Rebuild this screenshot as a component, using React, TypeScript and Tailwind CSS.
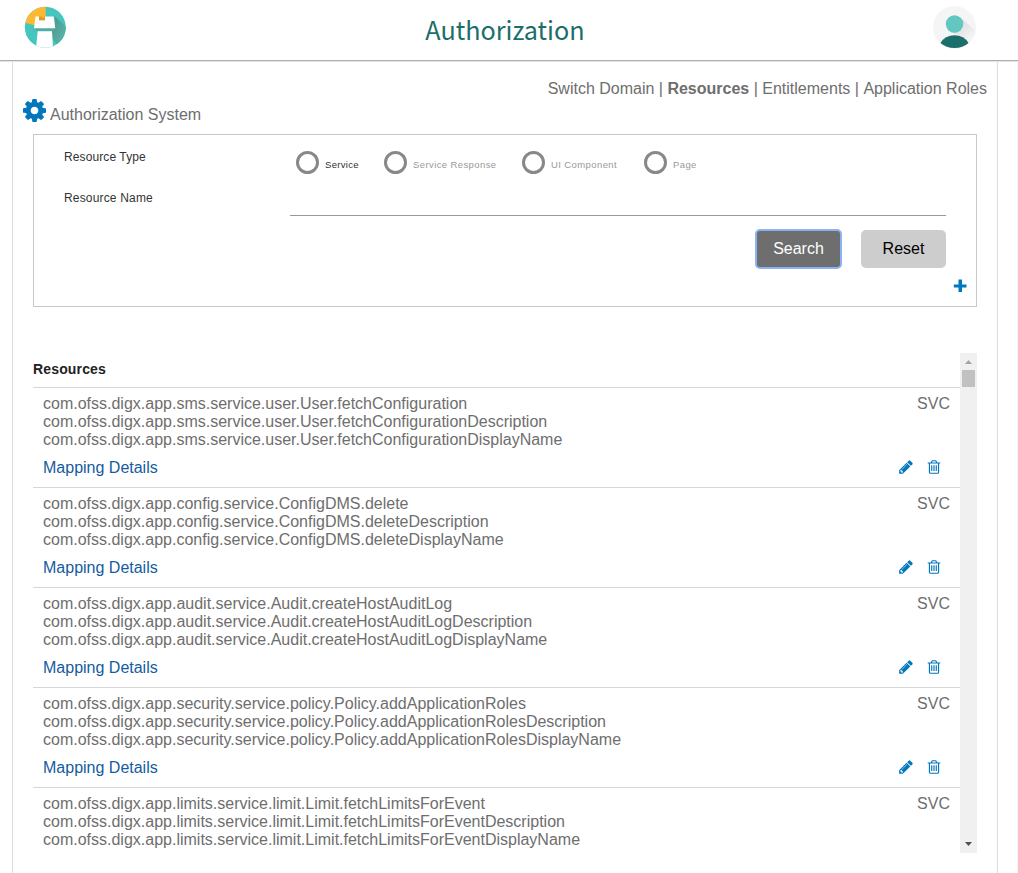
import React from "react";

const resources = [
  "com.ofss.digx.app.sms.service.user.User.fetchConfiguration",
  "com.ofss.digx.app.config.service.ConfigDMS.delete",
  "com.ofss.digx.app.audit.service.Audit.createHostAuditLog",
  "com.ofss.digx.app.security.service.policy.Policy.addApplicationRoles",
  "com.ofss.digx.app.limits.service.limit.Limit.fetchLimitsForEvent",
];

function Logo() {
  return (
    <svg width="42" height="42" viewBox="0 0 42 42">
      <defs>
        <clipPath id="logo-clip"><circle cx="21.300" cy="21.300" r="20.500" /></clipPath>
        <linearGradient id="logo-shade" x1="0" y1="0" x2="1" y2="1">
          <stop offset="0" stopColor="#4a958d" />
          <stop offset="1" stopColor="#5cbab1" />
        </linearGradient>
      </defs>
      <g clipPath="url(#logo-clip)">
        <rect width="42" height="42" fill="#45c5be" />
        <path d="M30.500 10 L42 21 V36 L34 40 L28 32 V25 L31 22 Z" fill="url(#logo-shade)" />
        <path d="M0 0 H21.700 V22 L0 16.500 Z" fill="#fdb933" />
        <path d="M10 22 H31 L28 25 H12 Z" fill="#55aaa2" />
        <path d="M11.500 10.500 H15 V14.200 H21 V10.500 H29.700 L31.300 22.200 H10 Z" fill="#fff" />
        <path d="M15 10.500 H17.500 L19 12 L21 10.500 V14.200 H15 Z" fill="#e09a26" />
        <path d="M13.700 25.200 H28 L29 42 H12 Z" fill="#fff" />
      </g>
    </svg>
  );
}

function Avatar() {
  return (
    <svg width="44" height="43" viewBox="0 0 44 43">
      <defs>
        <clipPath id="avatar-clip"><circle cx="21.500" cy="21.500" r="21.500" /></clipPath>
        <linearGradient id="avatar-shade" x1="0" y1="0" x2="1" y2="1">
          <stop offset="0" stopColor="#d2d2d2" />
          <stop offset="0.900" stopColor="#f5f5f5" />
        </linearGradient>
      </defs>
      <g clipPath="url(#avatar-clip)">
        <rect width="44" height="43" fill="#f5f5f5" />
        <path d="M28 12 L43 25 V33 H35 L17 26 Z" fill="url(#avatar-shade)" />
        <circle cx="21.500" cy="18" r="8.700" fill="#62c7c0" />
        <path d="M7.500 37 Q12 29.300 21.500 29.300 Q31 29.300 35.500 37 Q30 42 21.500 42 Q13 42 7.500 37 Z" fill="#1c6e6a" />
      </g>
    </svg>
  );
}

function Cog() {
  return (
    <svg width="23" height="23" viewBox="0 128 1536 1536" fill="#0277bd">
      <path d="M1024 896q0-106-75-181t-181-75-181 75-75 181 75 181 181 75 181-75 75-181zm512-109v222q0 12-8 23t-20 13l-185 28q-19 54-39 91 35 50 107 138 10 12 10 25t-9 23q-27 37-99 108t-94 71q-12 0-26-9l-138-108q-44 23-91 38-16 136-29 186-7 28-36 28h-222q-14 0-24.500-8.500t-11.500-21.500l-28-184q-49-16-90-37l-141 107q-10 9-25 9-14 0-25-11-126-114-165-168-7-10-7-23 0-12 8-23 15-21 51-66.500t54-70.500q-27-50-41-99l-183-27q-13-2-21-12.500t-8-23.500v-222q0-12 8-23t19-13l186-28q14-46 39-92-40-57-107-138-10-12-10-24 0-10 9-23 26-36 98.500-107.500t94.500-71.500q13 0 26 10l138 107q44-23 91-38 16-136 29-186 7-28 36-28h222q14 0 24.500 8.500t11.500 21.500l28 184q49 16 90 37l142-107q9-9 24-9 13 0 25 10 129 119 165 170 7 8 7 22 0 12-8 23-15 21-51 66.500t-54 70.500q26 50 41 98l183 28q13 2 21 12.500t8 23.500z" />
    </svg>
  );
}

function Pencil() {
  return (
    <svg width="16" height="16" viewBox="0 0 1792 1792" fill="#0277bd">
      <path d="M491 1536l91-91-235-235-91 91v107h128v128h107zm523-928q0-22-22-22-10 0-17 7l-542 542q-7 7-7 17 0 22 22 22 10 0 17-7l542-542q7-7 7-17zm-54-192l416 416-832 832h-416v-416zm683 96q0 53-37 90l-166 166-416-416 166-165q36-38 90-38 53 0 91 38l235 234q37 39 37 91z" />
    </svg>
  );
}

function Trash() {
  return (
    <svg width="16" height="16" viewBox="0 0 1792 1792" fill="#0277bd">
      <path d="M704 736v576q0 14-9 23t-23 9h-64q-14 0-23-9t-9-23v-576q0-14 9-23t23-9h64q14 0 23 9t9 23zm256 0v576q0 14-9 23t-23 9h-64q-14 0-23-9t-9-23v-576q0-14 9-23t23-9h64q14 0 23 9t9 23zm256 0v576q0 14-9 23t-23 9h-64q-14 0-23-9t-9-23v-576q0-14 9-23t23-9h64q14 0 23 9t9 23zm128 724v-948h-896v948q0 22 7 40.500t14.500 27 10.500 8.500h832q3 0 10.500-8.500t14.500-27 7-40.500zm-672-1076h448l-48-117q-7-9-17-11h-317q-10 2-17 11zm928 32v64q0 14-9 23t-23 9h-96v948q0 83-47 143.500t-113 60.500h-832q-66 0-113-58.500t-47-141.500v-952h-96q-14 0-23-9t-9-23v-64q0-14 9-23t23-9h309l70-167q15-37 54-63t79-26h320q40 0 79 26t54 63l70 167h309q14 0 23 9t9 23z" />
    </svg>
  );
}

function Radio({ label, className, dark }: { label: string; className: string; dark?: boolean }) {
  return (
    <label className={`flex h-6 shrink-0 items-center ${className}`}>
      <span className="size-[23px] shrink-0 rounded-full border-[3px] border-[#888]" />
      <span className={`ml-1.5 pt-[5px] text-[9.500px] leading-[15px] whitespace-nowrap ${dark ? "tracking-[0.3px] text-[#333]" : "tracking-[0.4px] text-[#999]"}`}>
        {label}
      </span>
    </label>
  );
}

function ResourceRow({ name, showActions }: { name: string; showActions: boolean }) {
  return (
    <div className="h-[100px] border-t border-[#d6d7da] px-2.5 pt-[7px] leading-[18px]">
      <div className="flex justify-between">
        <div>
          <p>{name}</p>
          <p>{name}Description</p>
          <p>{name}DisplayName</p>
        </div>
        <span>SVC</span>
      </div>
      {showActions && (
        <div className="mt-2.5 flex items-start justify-between">
          <a className="text-[#145c9e]">Mapping Details</a>
          <div className="mr-2 flex gap-3">
            <Pencil />
            <Trash />
          </div>
        </div>
      )}
    </div>
  );
}

export default function App() {
  return (
    <div className="flex h-[873px] w-[1018px] flex-col overflow-hidden bg-white font-['Liberation_Sans',Arial,sans-serif] text-base text-[#6e6e6e]">
      <header className="h-[62px] shrink-0 border-b border-[#e4e4e4]">
        <div className="grid h-[61px] grid-cols-[1fr_auto_1fr] border-b border-[#adadad]">
          <div className="pt-1.5 pl-6"><Logo /></div>
          <h1 className="ml-[-8px] pt-[9px] font-['Noto_Sans_CJK_SC',sans-serif] text-[25.2px] leading-10 text-[#1c6e6a]">
            Authorization
          </h1>
          <div className="flex justify-end pt-1.5 pr-[41px]"><Avatar /></div>
        </div>
      </header>

      <div className="flex min-h-0 flex-1 border-r border-[#f3f3f3]">
        <main className="ml-3 flex w-[986px] flex-col border-x border-[#dedede]">
          <nav className="mt-[18px] mr-2.5 flex justify-end leading-[18px] whitespace-pre">
            <span>Switch Domain | </span><b>Resources</b><span> | Entitlements | </span><span>Application Roles</span>
          </nav>

          <div className="mt-[1px] ml-2.5 flex h-[26px] items-start">
            <Cog />
            <span className="mt-[7px] ml-1 leading-[18px]">Authorization System</span>
          </div>

          <section className="mt-[9px] ml-5 flex h-[173px] w-[944px] shrink-0 flex-col border border-[#c8c8c8] text-[#333]">
            <div className="flex h-[42px] pl-[30px]">
              <span className="w-[232px] pt-[14px] text-xs leading-4 tracking-[0.1px]">Resource Type</span>
              <div className="flex pt-[15px]">
                <Radio label="Service" dark className="w-[88px]" />
                <Radio label="Service Response" className="w-[138px]" />
                <Radio label="UI Component" className="w-[122px]" />
                <Radio label="Page" className="w-[60px]" />
              </div>
            </div>
            <div className="flex h-[39px] pl-[30px]">
              <span className="w-[226px] pt-[13px] text-xs leading-4 tracking-[0.17px]">Resource Name</span>
              <input className="h-[39px] w-[656px] border-b border-[#999] outline-none" />
            </div>
            <div className="mt-[14px] flex justify-end gap-5 pr-[30px]">
              <button className="h-[38px] w-[85px] rounded bg-[#6e6e6e] text-white outline-2 -outline-offset-1 outline-[#8cb2f5]">Search</button>
              <button className="h-[38px] w-[85px] rounded-[5px] bg-[#cdcdcd] text-black">Reset</button>
            </div>
            <div className="mt-[11px] flex justify-end pr-[9px]">
              <svg width="14" height="14" viewBox="0 0 14 14" fill="#0277bd">
                <path d="M5.500.5h3.500v5h4.500v3H9v4.500H5.500v-4.500H.8v-3h4.700z" />
              </svg>
            </div>
          </section>

          <section className="mt-[46px] ml-5 flex h-[500px] w-[944px] shrink-0">
            <div className="min-w-0 flex-1 overflow-hidden">
              <h2 className="h-[34px] pt-[7px] text-sm leading-[18px] font-bold tracking-[0.15px] text-[#222]">Resources</h2>
              {resources.map((name, i) => (
                <ResourceRow key={name} name={name} showActions={i < resources.length - 1} />
              ))}
            </div>
            <div className="flex w-[17px] flex-col items-center justify-between bg-[#f0f0f0]">
              <div className="flex flex-col items-center">
                <svg width="17" height="17" viewBox="0 0 17 17"><path d="M5 11h7L8.500 7z" fill="#a3a3a3" /></svg>
                <div className="h-[17px] w-[13px] bg-[#c1c1c1]" />
              </div>
              <svg width="17" height="17" viewBox="0 0 17 17"><path d="M5 6h7L8.500 10z" fill="#505050" /></svg>
            </div>
          </section>
        </main>
      </div>
    </div>
  );
}
